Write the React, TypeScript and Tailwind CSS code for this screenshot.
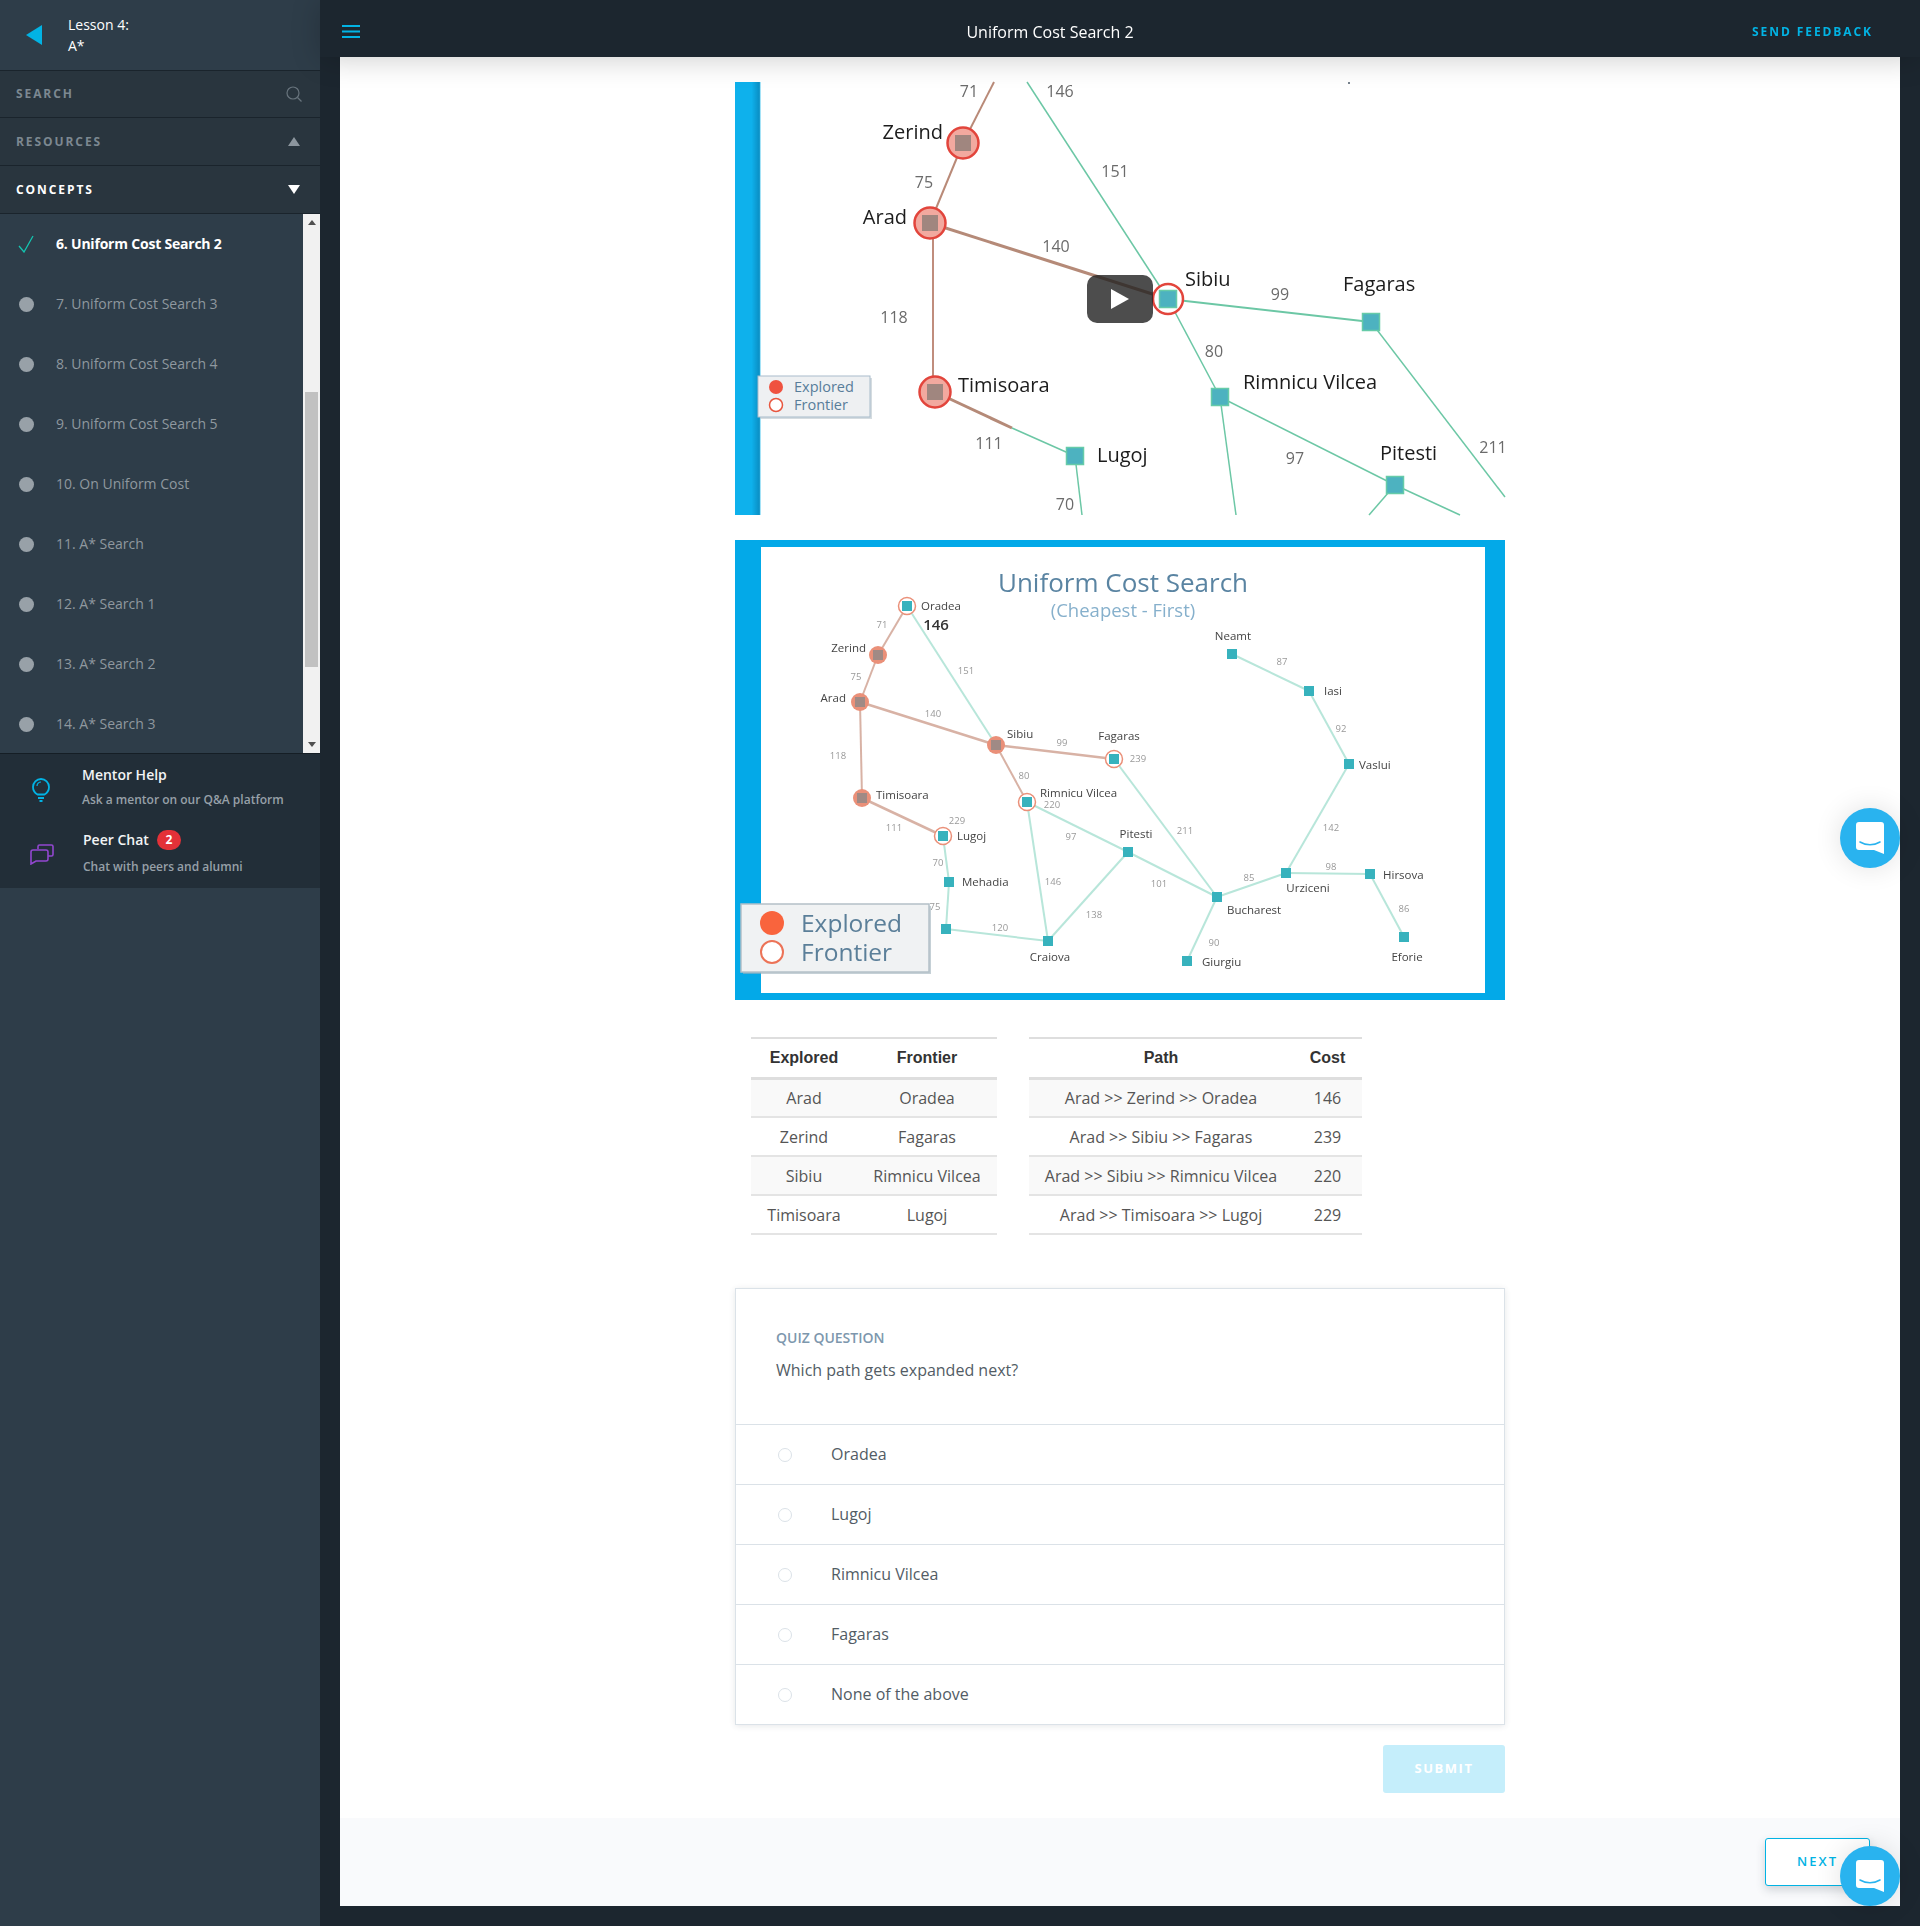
import React from 'react';

const concepts = [
  '6. Uniform Cost Search 2',
  '7. Uniform Cost Search 3',
  '8. Uniform Cost Search 4',
  '9. Uniform Cost Search 5',
  '10. On Uniform Cost',
  '11. A* Search',
  '12. A* Search 1',
  '13. A* Search 2',
  '14. A* Search 3',
];

type Label = [string, number, number, ('start' | 'middle' | 'end')?];

/* --- VIDEO FRAME (zoomed in map) --- */
const videoEdges: [number, number, number, number, string, number][] = [
  [259, 0, 228, 61, '#b98a78', 2],
  [228, 61, 195, 141, '#b98a78', 2],
  [198, 141, 198, 310, '#c08d7d', 2],
  [195, 141, 433, 217, '#b58a78', 3],
  [200, 310, 277, 346, '#b58a78', 3],
  [277, 346, 340, 374, '#6cc7a5', 1.5],
  [292, 0, 433, 217, '#6cc7a5', 1.5],
  [433, 217, 636, 240, '#6cc7a5', 2],
  [433, 217, 485, 315, '#6cc7a5', 1.5],
  [636, 240, 770, 415, '#6cc7a5', 1.5],
  [485, 315, 660, 403, '#6cc7a5', 1.5],
  [485, 315, 501, 433, '#6cc7a5', 1.5],
  [340, 374, 347, 433, '#6cc7a5', 1.5],
  [660, 403, 634, 433, '#6cc7a5', 1.5],
  [660, 403, 725, 433, '#6cc7a5', 1.5],
];

const videoNames: Label[] = [
  ['Zerind', 208, 49, 'end'],
  ['Arad', 172, 134, 'end'],
  ['Sibiu', 450, 196],
  ['Fagaras', 608, 201],
  ['Rimnicu Vilcea', 508, 299],
  ['Timisoara', 223, 302],
  ['Lugoj', 362, 372],
  ['Pitesti', 645, 370],
];

const videoCosts: Label[] = [
  ['71', 234, 9, 'middle'],
  ['146', 325, 9, 'middle'],
  ['151', 380, 89, 'middle'],
  ['75', 189, 100, 'middle'],
  ['140', 321, 164, 'middle'],
  ['99', 545, 212, 'middle'],
  ['118', 159, 235, 'middle'],
  ['80', 479, 269, 'middle'],
  ['111', 254, 361, 'middle'],
  ['97', 560, 376, 'middle'],
  ['211', 758, 365, 'middle'],
  ['70', 330, 422, 'middle'],
];

const VideoFrame = () => (
  <svg viewBox="0 0 770 433" className="block h-[433px] w-[770px] overflow-visible blur-[0.4px]">
    <defs>
      <linearGradient id="barEdge" x1="0" x2="1" y1="0" y2="0">
        <stop offset="0" stopColor="#0eb1ec" />
        <stop offset="0.65" stopColor="#0eb1ec" />
        <stop offset="0.95" stopColor="#0b8fc4" />
        <stop offset="1" stopColor="#4cc6ef" />
      </linearGradient>
    </defs>
    <rect x="0" y="0" width="25.5" height="433" fill="url(#barEdge)" />
    {videoEdges.map(([x1, y1, x2, y2, c, w], i) => (
      <line key={i} x1={x1} y1={y1} x2={x2} y2={y2} stroke={c} strokeWidth={w} />
    ))}
    {[[228, 61], [195, 141], [200, 310]].map(([x, y], i) => (
      <g key={i}>
        <circle cx={x} cy={y} r="15.5" fill="#f2a99f" stroke="#e2453c" strokeWidth="2.5" />
        <rect x={x - 8} y={y - 8} width="16" height="16" fill="#a0867f" />
      </g>
    ))}
    <circle cx="433" cy="217" r="15" fill="#fff" stroke="#e2453c" strokeWidth="2.5" />
    {[[433, 217], [636, 240], [485, 315], [340, 374], [660, 403]].map(([x, y], i) => (
      <rect key={i} x={x - 8.5} y={y - 8.5} width="17" height="17" fill="#4db2c0" stroke="#66cba8" strokeWidth="1.5" />
    ))}
    {videoNames.map(([t, x, y, a], i) => (
      <text key={i} x={x} y={y} textAnchor={a || 'start'} dominantBaseline="central" fontSize="20" fill="#1c1c1c">{t}</text>
    ))}
    {videoCosts.map(([t, x, y, a], i) => (
      <text key={i} x={x} y={y} textAnchor={a} dominantBaseline="central" fontSize="16" fill="#6b6b6b">{t}</text>
    ))}
    <circle cx="614" cy="1" r="1" fill="#4a5a68" />
    <rect x="25" y="296" width="112" height="41" fill="#b9c4cc" opacity="0.6" />
    <rect x="23" y="294" width="112" height="41" fill="#eef0f2" stroke="#a9bccb" strokeWidth="1" />
    <circle cx="41" cy="305" r="7" fill="#ef5240" />
    <circle cx="41" cy="323" r="6.5" fill="#fff" stroke="#e8563f" strokeWidth="1.5" />
    <text x="59" y="304" dominantBaseline="central" fontSize="14.5" fill="#587d9a">Explored</text>
    <text x="59" y="322" dominantBaseline="central" fontSize="14.5" fill="#587d9a">Frontier</text>
  </svg>
);

/* --- FULL MAP IMAGE --- */
const P: Record<string, [number, number]> = {
  oradea: [172, 66], zerind: [143, 115], arad: [125, 162], sibiu: [261, 205], fagaras: [379, 219],
  timisoara: [127, 258], rimnicu: [292, 262], lugoj: [208, 296], pitesti: [393, 312], mehadia: [214, 342],
  dobreta: [211, 389], craiova: [313, 401], bucharest: [482, 357], urziceni: [551, 333], hirsova: [635, 334],
  eforie: [669, 397], giurgiu: [452, 421], vaslui: [614, 224], iasi: [574, 151], neamt: [497, 114],
};

const brownEdges = [
  ['oradea', 'zerind'], ['zerind', 'arad'], ['arad', 'timisoara'], ['arad', 'sibiu'],
  ['sibiu', 'fagaras'], ['sibiu', 'rimnicu'], ['timisoara', 'lugoj'],
];
const greenEdges = [
  ['oradea', 'sibiu'], ['fagaras', 'bucharest'], ['rimnicu', 'pitesti'], ['rimnicu', 'craiova'],
  ['lugoj', 'mehadia'], ['mehadia', 'dobreta'], ['dobreta', 'craiova'], ['craiova', 'pitesti'],
  ['pitesti', 'bucharest'], ['bucharest', 'urziceni'], ['bucharest', 'giurgiu'], ['urziceni', 'hirsova'],
  ['hirsova', 'eforie'], ['urziceni', 'vaslui'], ['vaslui', 'iasi'], ['iasi', 'neamt'],
];

const mapNames: Label[] = [
  ['Oradea', 186, 65], ['Zerind', 131, 107, 'end'], ['Arad', 111, 157, 'end'], ['Sibiu', 272, 193],
  ['Fagaras', 384, 195, 'middle'], ['Timisoara', 141, 254], ['Rimnicu Vilcea', 305, 252], ['Lugoj', 222, 295],
  ['Pitesti', 401, 293, 'middle'], ['Mehadia', 227, 341], ['Craiova', 315, 416, 'middle'], ['Bucharest', 492, 369],
  ['Urziceni', 573, 347, 'middle'], ['Hirsova', 648, 334], ['Eforie', 672, 416, 'middle'], ['Giurgiu', 467, 421],
  ['Vaslui', 624, 224], ['Iasi', 589, 150], ['Neamt', 498, 95, 'middle'],
];

const mapCosts: Label[] = [
  ['71', 147, 84], ['75', 121, 136], ['151', 231, 130], ['140', 198, 173], ['99', 327, 202], ['239', 403, 218],
  ['118', 103, 215], ['80', 289, 235], ['220', 317, 264], ['229', 222, 280], ['111', 159, 287], ['97', 336, 296],
  ['211', 450, 290], ['70', 203, 322], ['146', 318, 341], ['101', 424, 343], ['75', 200, 366], ['120', 265, 387],
  ['138', 359, 374], ['85', 514, 337], ['98', 596, 326], ['86', 669, 368], ['90', 479, 402], ['142', 596, 287],
  ['92', 606, 188], ['87', 547, 121],
];

const MapImage = () => (
  <svg viewBox="0 0 770 460" className="block h-[460px] w-[770px] overflow-visible blur-[0.7px]">
    <rect x="0" y="0" width="770" height="460" fill="#03a9e8" />
    <rect x="26" y="7" width="724" height="446" fill="#fff" />
    {brownEdges.map(([a, b], i) => (
      <line key={i} x1={P[a][0]} y1={P[a][1]} x2={P[b][0]} y2={P[b][1]} stroke="#d8b2a5" strokeWidth={i === 3 || i === 4 || i === 6 ? 2.5 : 2} />
    ))}
    {greenEdges.map(([a, b], i) => (
      <line key={i} x1={P[a][0]} y1={P[a][1]} x2={P[b][0]} y2={P[b][1]} stroke="#b8e6da" strokeWidth="2" />
    ))}
    {['zerind', 'arad', 'sibiu', 'timisoara'].map((k) => (
      <g key={k}>
        <circle cx={P[k][0]} cy={P[k][1]} r="9" fill="#ea9079" />
        <rect x={P[k][0] - 5} y={P[k][1] - 5} width="10" height="10" fill="#a08a85" />
      </g>
    ))}
    {['oradea', 'fagaras', 'rimnicu', 'lugoj'].map((k) => (
      <circle key={k} cx={P[k][0]} cy={P[k][1]} r="8.5" fill="#fff" stroke="#ea9079" strokeWidth="1.5" />
    ))}
    {['oradea', 'fagaras', 'rimnicu', 'lugoj', 'pitesti', 'mehadia', 'dobreta', 'craiova', 'bucharest', 'urziceni', 'hirsova', 'eforie', 'giurgiu', 'vaslui', 'iasi', 'neamt'].map((k) => (
      <rect key={k} x={P[k][0] - 5} y={P[k][1] - 5} width="10" height="10" fill="#37b2bd" />
    ))}
    <text x="388" y="42" textAnchor="middle" dominantBaseline="central" fontSize="26" fill="#5a84a2">Uniform Cost Search</text>
    <text x="388" y="69" textAnchor="middle" dominantBaseline="central" fontSize="18.5" fill="#86b0cc">(Cheapest - First)</text>
    <text x="201" y="84" textAnchor="middle" dominantBaseline="central" fontSize="15" fontWeight="600" fill="#333">146</text>
    {mapNames.map(([t, x, y, a], i) => (
      <text key={i} x={x} y={y} textAnchor={a || 'start'} dominantBaseline="central" fontSize="11.5" fontWeight="500" fill="#444">{t}</text>
    ))}
    {mapCosts.map(([t, x, y], i) => (
      <text key={i} x={x} y={y} textAnchor="middle" dominantBaseline="central" fontSize="9.5" fill="#999">{t}</text>
    ))}
    <rect x="8" y="366" width="188" height="68" fill="#9fb0ba" opacity="0.6" />
    <rect x="6" y="364" width="188" height="68" fill="#f0f2f3" stroke="#b4c0c8" strokeWidth="1.5" />
    <circle cx="37" cy="383" r="12" fill="#f9643d" />
    <circle cx="37" cy="412" r="11" fill="#fff" stroke="#ec7357" strokeWidth="2" />
    <text x="66" y="382" dominantBaseline="central" fontSize="24.5" fill="#5b7f99">Explored</text>
    <text x="66" y="411" dominantBaseline="central" fontSize="24.5" fill="#5b7f99">Frontier</text>
  </svg>
);

/* --- SMALL PIECES --- */
const ChatBubble = ({ className }: { className: string }) => (
  <div className={`absolute z-20 flex h-[60px] w-[60px] items-center justify-center rounded-full bg-[#29b3ef] shadow-[0_0_28px_rgba(0,0,0,0.12)] ${className}`}>
    <svg viewBox="0 0 28 32" className="h-8 w-7">
      <path d="M3 0h22a3 3 0 0 1 3 3v29l-10-4H3a3 3 0 0 1-3-3V3a3 3 0 0 1 3-3z" fill="#fff" />
      <path d="M4 20c6 3.6 14 3.6 20 0" fill="none" stroke="#29b3ef" strokeWidth="1.6" strokeLinecap="round" />
    </svg>
  </div>
);

const SideRow = ({ label, active, up }: { label: string; active?: boolean; up?: boolean }) => (
  <div className="flex h-12 items-center justify-between border-b border-[#1a242c] bg-[#29353e] pr-[20px] pl-4">
    <span className={`text-xs font-bold tracking-[0.16em] ${active ? 'text-white' : 'text-[#7c8891]'}`}>{label}</span>
    <svg viewBox="0 0 12 9" className="h-[9px] w-3">
      <path d={up ? 'M6 0l6 9H0z' : 'M6 9L0 0h12z'} fill={active ? '#fff' : '#8c969e'} />
    </svg>
  </div>
);

const TableCell = ({ children }: { children: string }) => (
  <td className="h-[39px] border-b-2 border-[#e4e4e4] p-0 text-center">{children}</td>
);

const DataTable = ({ widths, head, rows, className }: { widths: string[]; head: string[]; rows: string[][]; className: string }) => (
  <table className={`table-fixed border-collapse text-base text-[#555] ${className}`}>
    <colgroup>
      {widths.map((w) => <col key={w} className={w} />)}
    </colgroup>
    <thead>
      <tr>
        {head.map((h) => (
          <th key={h} className="h-[40px] border-t-2 border-b-[3px] border-[#dedede] p-0 text-center font-['Liberation_Sans',sans-serif] font-bold text-[#333]">{h}</th>
        ))}
      </tr>
    </thead>
    <tbody>
      {rows.map((r, i) => (
        <tr key={i} className={i % 2 === 0 ? 'bg-[#f9f9f9]' : ''}>
          {r.map((c, j) => <TableCell key={j}>{c}</TableCell>)}
        </tr>
      ))}
    </tbody>
  </table>
);

const options = ['Oradea', 'Lugoj', 'Rimnicu Vilcea', 'Fagaras', 'None of the above'];

const App = () => (
  <div className="relative flex h-[1926px] w-[1920px] overflow-hidden bg-[#1c262f] font-['Open_Sans',sans-serif]">
    {/* Sidebar */}
    <aside className="flex w-[320px] shrink-0 flex-col bg-[#2e3d49]">
      <div className="flex h-[71px] items-center border-b border-[#1a242c] pl-[26px]">
        <svg viewBox="0 0 16 20" className="h-5 w-4"><path d="M16 0v20L0 10z" fill="#02b3e4" /></svg>
        <div className="ml-[26px] text-sm leading-[21px] text-white">
          <div>Lesson 4:</div>
          <div>A*</div>
        </div>
      </div>
      <div className="flex h-[47px] items-center justify-between border-b border-[#1a242c] bg-[#29353e] pr-[18px] pl-4">
        <span className="text-xs font-bold tracking-[0.16em] text-[#7c8891]">SEARCH</span>
        <svg viewBox="0 0 16 16" className="h-4 w-4" fill="none" stroke="#68747d" strokeWidth="1.2">
          <circle cx="7" cy="7" r="6" />
          <path d="M11.5 11.5L15.5 15.5" />
        </svg>
      </div>
      <SideRow label="RESOURCES" up />
      <SideRow label="CONCEPTS" active />
      <div className="flex h-[539px]">
        <ul className="w-[303px]">
          {concepts.map((c, i) => (
            <li key={c} className="flex h-[60px] items-center">
              <span className="flex w-[56px] justify-center pr-[4px]">
                {i === 0 ? (
                  <svg viewBox="0 0 16 18" className="h-[18px] w-4" fill="none" stroke="#14c4b0" strokeWidth="1.3">
                    <path d="M1 11l5 6L15 1" />
                  </svg>
                ) : (
                  <span className="h-[15px] w-[15px] rounded-full bg-[#98a1a8]" />
                )}
              </span>
              <span className={i === 0 ? 'text-sm font-bold tracking-[-0.015em] text-white' : 'text-sm text-[#8f989f]'}>{c}</span>
            </li>
          ))}
        </ul>
        <div className="relative flex w-[17px] flex-col items-center justify-between bg-[#f1f1f1] py-[6px]">
          <svg viewBox="0 0 8 5" className="h-[5px] w-2"><path d="M4 0l4 5H0z" fill="#505050" /></svg>
          <div className="absolute top-[178px] left-[2px] h-[275px] w-[13px] bg-[#c1c1c1]" />
          <svg viewBox="0 0 8 5" className="h-[5px] w-2"><path d="M4 5L0 0h8z" fill="#505050" /></svg>
        </div>
      </div>
      <div className="h-[135px] border-t border-[#151e25] bg-[#222e38]">
        <div className="flex h-[65px] items-center">
          <span className="flex w-[82px] justify-center pt-[6px]">
            <svg viewBox="0 0 18 24" className="h-6 w-[18px]" fill="none" stroke="#02b3e4" strokeWidth="1.8">
              <path d="M5.5 16.5C3 15 1 12.5 1 9a8 8 0 0 1 16 0c0 3.5-2 6-4.5 7.5z" />
              <path d="M6 20h6M7.5 23h3" />
              <path d="M5 8a4 4 0 0 1 4-4" strokeWidth="1.2" />
            </svg>
          </span>
          <div>
            <div className="text-sm font-semibold text-[#f2f4f5]">Mentor Help</div>
            <div className="mt-[7px] text-xs font-semibold text-[#97a0a8]">Ask a mentor on our Q&amp;A platform</div>
          </div>
        </div>
        <div className="flex h-[64px] items-center">
          <span className="flex w-[83px] justify-center pt-[6px]">
            <svg viewBox="0 0 24 21" className="h-[21px] w-6" fill="none" stroke="#9247cf" strokeWidth="1.6">
              <path d="M8 5V2.5A1.5 1.5 0 0 1 9.5 1h12A1.5 1.5 0 0 1 23 2.5v8a1.5 1.5 0 0 1-1.5 1.5H18" />
              <path d="M3 6h13a2 2 0 0 1 2 2v7a2 2 0 0 1-2 2H6l-5 3V8a2 2 0 0 1 2-2z" />
            </svg>
          </span>
          <div className="pt-[2px]">
            <div className="flex items-center text-sm font-semibold text-[#f2f4f5]">
              Peer Chat
              <span className="ml-2 flex h-5 w-6 items-center justify-center rounded-full bg-[#e33138] text-xs font-bold text-white">2</span>
            </div>
            <div className="mt-[9px] text-xs font-semibold text-[#97a0a8]">Chat with peers and alumni</div>
          </div>
        </div>
      </div>
    </aside>

    {/* Main */}
    <main className="flex w-[1600px] flex-col">
      <header className="relative z-10 flex h-[57px] shrink-0 items-center justify-between bg-[#1c262f] pt-[6px] pr-[47px] pl-[22px] shadow-[0_2px_30px_rgba(0,0,0,0.2)]">
        <svg viewBox="0 0 18 13" className="h-[13px] w-[18px]" stroke="#02b3e4" strokeWidth="2">
          <path d="M0 1h18M0 6.5h18M0 12h18" />
        </svg>
        <span className="absolute left-[620px] w-[220px] text-center text-base text-white">Uniform Cost Search 2</span>
        <span className="text-xs font-bold tracking-[0.16em] text-[#02b3e4]">SEND FEEDBACK</span>
      </header>
      <div className="mx-5 flex h-[1849px] flex-col bg-white">
        <div className="flex-1">
          <div className="mx-auto w-[770px] pt-[25px]">
            <div className="relative">
              <VideoFrame />
              <div className="absolute top-[193px] left-[352px] flex h-[48px] w-[66px] items-center justify-center rounded-[10px] bg-[#212121]/80">
                <svg viewBox="0 0 18 20" className="h-5 w-[18px]"><path d="M0 0l18 10L0 20z" fill="#fff" /></svg>
              </div>
            </div>
            <div className="mt-[25px]"><MapImage /></div>

            <div className="mt-[37px] flex gap-8 pl-4">
              <DataTable
                className="w-[246px]"
                widths={['w-[106px]', 'w-[140px]']}
                head={['Explored', 'Frontier']}
                rows={[['Arad', 'Oradea'], ['Zerind', 'Fagaras'], ['Sibiu', 'Rimnicu Vilcea'], ['Timisoara', 'Lugoj']]}
              />
              <DataTable
                className="w-[333px]"
                widths={['w-[264px]', 'w-[69px]']}
                head={['Path', 'Cost']}
                rows={[
                  ['Arad >> Zerind >> Oradea', '146'],
                  ['Arad >> Sibiu >> Fagaras', '239'],
                  ['Arad >> Sibiu >> Rimnicu Vilcea', '220'],
                  ['Arad >> Timisoara >> Lugoj', '229'],
                ]}
              />
            </div>

            <section className="mt-[53px] border border-[#dbe2e8] shadow-[0_1px_6px_rgba(46,61,73,0.12)]">
              <div className="h-[135px] px-10 pt-[39px]">
                <div className="text-sm font-semibold text-[#7d97ad]">QUIZ QUESTION</div>
                <div className="mt-[10px] text-base text-[#525c65]">Which path gets expanded next?</div>
              </div>
              {options.map((o) => (
                <div key={o} className="flex h-[60px] items-center border-t border-[#dbe2e8] pl-[42px] text-base text-[#525c65]">
                  <span className="h-[14px] w-[14px] rounded-full border border-[#dbe2e8]" />
                  <span className="ml-[39px] -translate-y-px">{o}</span>
                </div>
              ))}
            </section>

            <div className="mt-[20px] flex justify-end">
              <div className="flex h-12 w-[122px] items-center justify-center rounded-[3px] bg-[#c5eefb] text-[13px] font-bold tracking-[0.12em] text-white">SUBMIT</div>
            </div>
          </div>
        </div>
        <div className="flex h-[88px] shrink-0 justify-end bg-[#f9fafc] pt-5 pr-[30px]">
          <div className="flex h-12 w-[105px] items-center justify-center rounded-[3px] border border-[#02b3e4] bg-white text-[13px] font-semibold tracking-[0.16em] text-[#02b3e4] shadow-[0_4px_10px_rgba(46,61,73,0.2)]">NEXT</div>
        </div>
      </div>
    </main>

    <ChatBubble className="top-[808px] left-[1840px]" />
    <ChatBubble className="top-[1846px] left-[1840px]" />
  </div>
);

export default App;
